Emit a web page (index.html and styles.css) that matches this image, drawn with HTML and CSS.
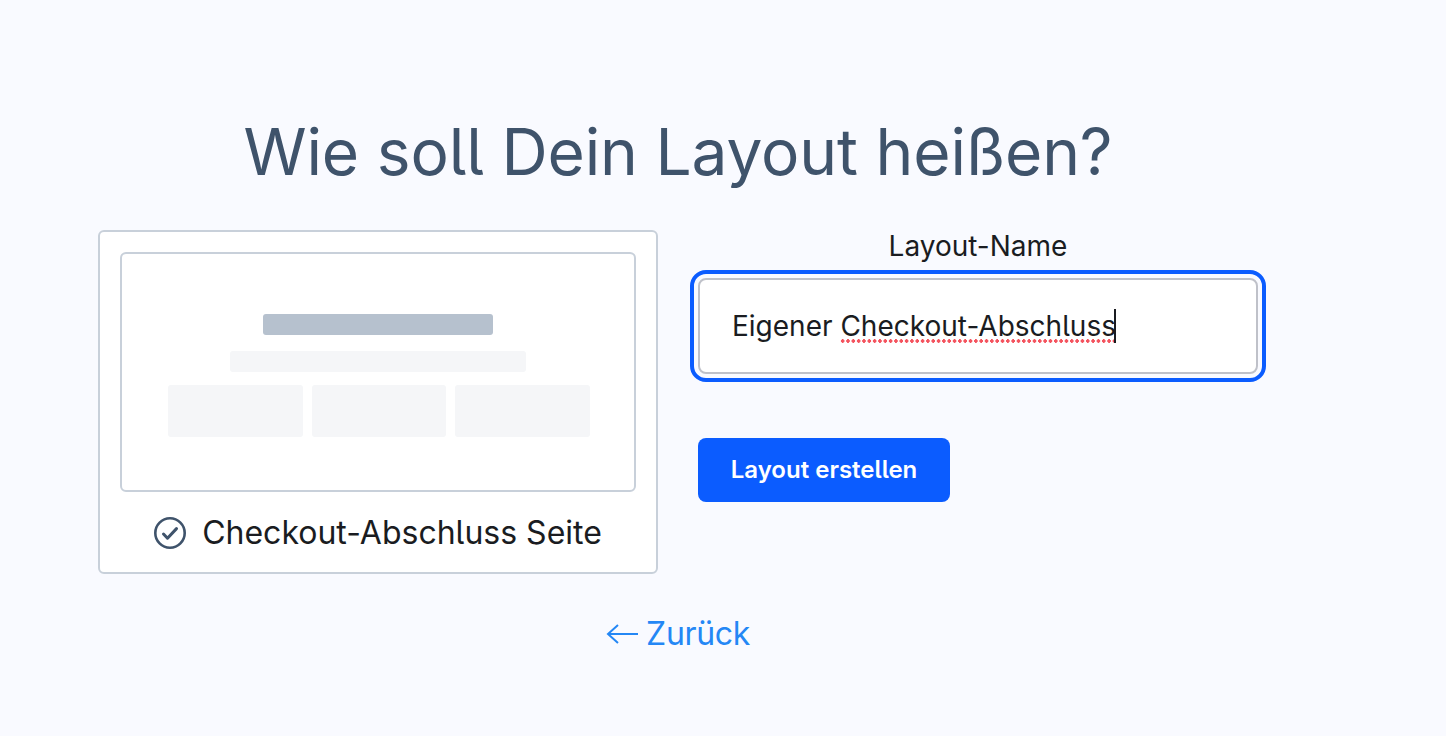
FILE: index.html
```html
<!DOCTYPE html>
<html lang="de">
<head>
    <meta charset="UTF-8">
    <meta name="viewport" content="width=device-width, initial-scale=1.0">
    <title>Layout erstellen</title>
    <link rel="stylesheet" href="styles.css">
</head>
<body>

<div class="container">
    <h1 class="titel">Wie soll Dein Layout heißen?</h1>

    <div class="spalten">
        <div class="karte">
            <div class="vorschau">
                <div class="balken"></div>
                <div class="zeile"></div>
                <div class="kacheln">
                    <div class="kachel"></div>
                    <div class="kachel"></div>
                    <div class="kachel"></div>
                </div>
            </div>
            <div class="karte-name">
                <svg class="haken" width="32" height="32" viewBox="0 0 32 32" fill="none">
                    <circle cx="16" cy="16" r="14.7" stroke="#3f536b" stroke-width="2.6"/>
                    <path d="M9.5 17l4 4.2 9-9.6" stroke="#3f536b" stroke-width="3" stroke-linecap="round" stroke-linejoin="round"/>
                </svg>
                <span>Checkout-Abschluss Seite</span>
            </div>
        </div>

        <div class="formular">
            <label class="feld-label">Layout-Name</label>
            <div class="feld">Eigener <span class="rechtschreibung">Checkout-Abschluss</span><span class="cursor"></span></div>
            <button class="knopf">Layout erstellen</button>
        </div>
    </div>

    <a class="zurueck" href="#">
        <svg width="32" height="20" viewBox="0 0 32 20" fill="none">
            <path d="M32 10H2M12 1l-10 9 10 9" stroke="#2487f5" stroke-width="2"/>
        </svg>
        <span>Zurück</span>
    </a>
</div>

</body>
</html>
```

FILE: styles.css
```css
body{
    margin: 0;
    height: 736px;
    overflow: hidden;
    background: #f9faff;
    font-family: "Inter", "Liberation Sans", sans-serif;
    font-feature-settings: "cv05";
    color: #1a1c21;
}

.container{
    width: 1160px;
    margin-left: 98px;
    padding-top: 117px;
    display: flex;
    flex-direction: column;
    align-items: center;
}

.titel{
    margin: 0 0 43px 0;
    font-size: 64px;
    line-height: 70px;
    font-weight: 400;
    letter-spacing: -0.15px;
    color: #3f536b;
}

.spalten{
    width: 100%;
    display: flex;
    gap: 40px;
    align-items: flex-start;
}

.karte{
    box-sizing: border-box;
    width: 560px;
    height: 344px;
    padding: 20px;
    background: #fff;
    border: 2px solid #c8d0da;
    border-radius: 6px;
}

.vorschau{
    box-sizing: border-box;
    height: 240px;
    padding-top: 60px;
    border: 2px solid #c8d0da;
    border-radius: 6px;
    display: flex;
    flex-direction: column;
    align-items: center;
}

.balken{
    width: 230px;
    height: 21px;
    background: #b6c1ce;
    border-radius: 3px;
}

.zeile{
    width: 296px;
    height: 21px;
    margin-top: 16px;
    background: #f5f6f8;
    border-radius: 3px;
}

.kacheln{
    width: 422px;
    display: flex;
    gap: 9px;
    margin: 13px 0 0 2px;
}

.kachel{
    flex: 1;
    height: 52px;
    background: #f5f6f8;
    border-radius: 3px;
}

.karte-name{
    display: flex;
    align-items: center;
    justify-content: center;
    gap: 16px;
    margin-top: 22px;
    font-size: 32px;
    line-height: 38px;
}

.formular{
    width: 560px;
    display: flex;
    flex-direction: column;
    align-items: flex-start;
}

.feld-label{
    align-self: center;
    font-size: 28px;
    line-height: 32px;
}

.feld{
    box-sizing: border-box;
    width: 100%;
    height: 96px;
    margin-top: 16px;
    padding: 0 32px;
    display: flex;
    align-items: center;
    white-space: pre;
    background: #fff;
    border: 2px solid #bfc1c9;
    border-radius: 8px;
    outline: 4px solid #0b5cff;
    outline-offset: 4px;
    font-size: 28px;
}

.rechtschreibung{
    background: radial-gradient(circle, #f4545f 1.6px, transparent 2px) 0 100% / 5.33px 4px repeat-x;
}

.cursor{
    width: 2px;
    height: 34px;
    margin-left: -2px;
    background: #1a1c21;
}

.knopf{
    width: 252px;
    height: 64px;
    margin-top: 64px;
    padding-bottom: 2px;
    border: none;
    border-radius: 8px;
    background: #0b5cff;
    color: #fff;
    font-family: inherit;
    font-feature-settings: inherit;
    font-size: 24px;
    font-weight: 600;
}

.zurueck{
    display: flex;
    align-items: center;
    gap: 8px;
    margin-top: 40px;
    font-size: 32px;
    line-height: 40px;
    letter-spacing: -0.35px;
    color: #2487f5;
    text-decoration: none;
}
```
